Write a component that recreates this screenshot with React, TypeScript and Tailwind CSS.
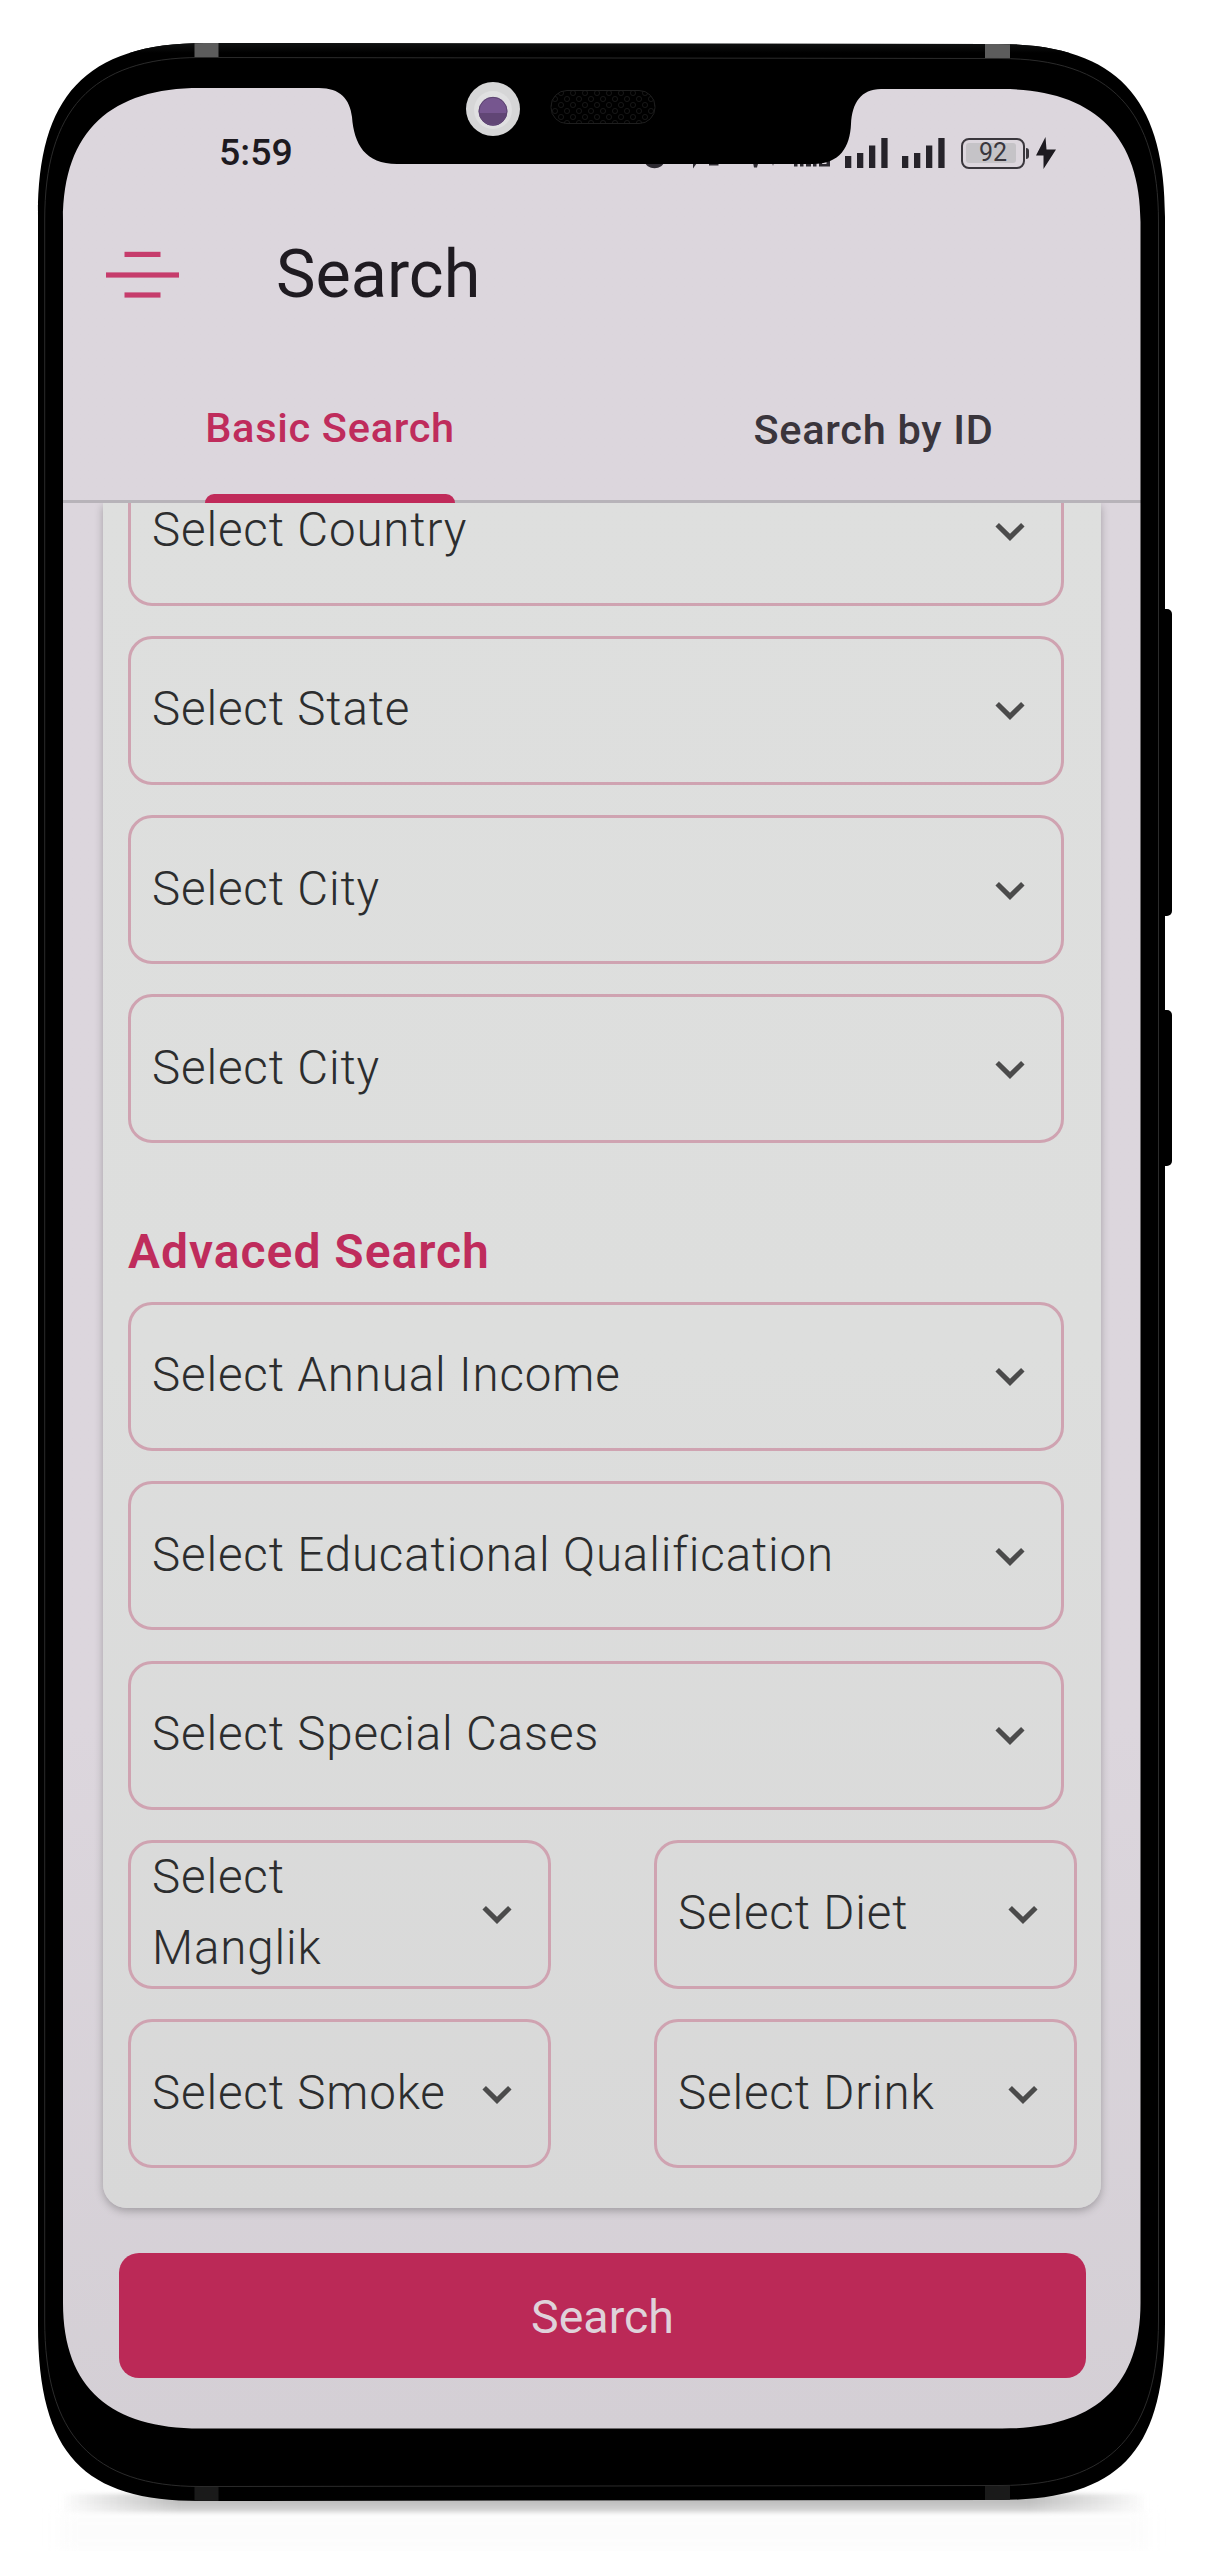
import React from "react";

function Chevron() {
  return (
    <svg className="mt-[2px] h-[24px] w-[36px] shrink-0" viewBox="0 0 36 24" fill="none">
      <path d="M5.2 4.8 L18 17.4 L30.8 4.8" stroke="#4b4b4b" strokeWidth="5" />
    </svg>
  );
}

function SelectField({ label, leading = "leading-[52px]" }: { label: string; leading?: string }) {
  return (
    <button
      className={`flex h-[149px] items-center justify-between gap-[20px] rounded-[24px] border-[3px] border-[#cfa3b1] pl-[21px] pr-[33px] text-left text-[47.5px] font-light tracking-[0.85px] text-[#2c2d2e] ${leading}`}
    >
      <span className="-mt-[2px] min-w-0">{label}</span>
      <Chevron />
    </button>
  );
}

function SignalBars() {
  return (
    <svg className="h-[30px] w-[43px]" viewBox="0 0 43 30" fill="#26232a">
      <rect x="0" y="18" width="6.3" height="12" />
      <rect x="12" y="15" width="6.3" height="15" />
      <rect x="24" y="7.5" width="6.3" height="22.5" />
      <rect x="36.3" y="0" width="6.3" height="30" />
    </svg>
  );
}

function StatusBar() {
  return (
    <div className="flex h-[130px] items-center pl-[156px] text-[#1d1a20]">
      <span className="-mt-[3px] w-[626px] text-[37.5px] leading-[40px] font-medium">5:59</span>
      <SignalBars />
      <span className="w-[14px]" />
      <SignalBars />
      <div className="ml-[16px] flex h-[31px] w-[64px] items-center rounded-[8px] border-[2.5px] border-[#3a373d] p-[3px]">
        <div className="flex h-[20px] w-[50px] items-center justify-center rounded-[3px] bg-[#c5c3c7] pl-[4px] text-[25px] leading-[20px] text-[#3a373d]">
          92
        </div>
      </div>
      <div className="ml-px h-[11px] w-[3px] rounded-r-sm bg-[#3a373d]" />
      <svg className="ml-[7px] h-[32px] w-[20px]" viewBox="0 0 20 32" fill="#1d1a20">
        <path d="M9.5 0 L0 18.5 H7.5 V32 L20 12.5 H10.5 Z" />
      </svg>
    </div>
  );
}

function AppHeader() {
  return (
    <header className="h-[415px]">
      <StatusBar />
      <div className="flex h-[112px] items-center pl-[43px]">
        <svg className="h-[48px] w-[73px]" viewBox="0 0 73 48" fill="#c63c6c">
          <rect x="18.5" y="1.8" width="36" height="5.2" />
          <rect x="0" y="22.4" width="73" height="5.2" />
          <rect x="18.5" y="42.4" width="36" height="5.2" />
        </svg>
        <h1 className="ml-[97px] text-[66.5px] leading-[80px] text-[#1f1b21]">Search</h1>
      </div>
      <div className="flex h-[173px] border-b-[3px] border-[#b7b3b9] text-[41.5px] leading-[50px] font-medium tracking-[0.7px]">
        <div className="flex h-[173px] w-[534px] flex-col items-center pt-[73px] text-[#bf2c5c]">
          <span>Basic Search</span>
          <span className="mt-[41px] h-[9px] w-[250px] rounded-t-[9px] bg-[#c02a5a]" />
        </div>
        <div className="flex w-[544px] justify-center pt-[75px] pl-[9px] text-[#3a353c]">
          <span>Search by ID</span>
        </div>
      </div>
    </header>
  );
}

function SearchForm() {
  return (
    <main className="flex h-[1705px] w-[998px] flex-col overflow-hidden rounded-b-[24px] bg-linear-to-b from-[#dedfde] via-[#dddedd] to-[#d8d8d8] pl-[25px]">
      <div className="-mt-[46.5px] flex w-[936px] flex-col gap-[30.3px]">
        <SelectField label="Select Country" />
        <SelectField label="Select State" />
        <SelectField label="Select City" />
        <SelectField label="Select City" />
      </div>
      <h2 className="mt-[79px] h-[60px] text-[48px] leading-[60px] font-semibold tracking-[1px] text-[#bf2c5c]">
        Advaced Search
      </h2>
      <div className="mt-[19.6px] flex w-[936px] flex-col gap-[30.3px]">
        <SelectField label="Select Annual Income" />
        <SelectField label="Select Educational Qualification" />
        <SelectField label="Select Special Cases" />
      </div>
      <div className="mt-[30.3px] grid w-[949px] grid-cols-[423px_423px] justify-between gap-y-[30.3px]">
        <SelectField label="Select Manglik" leading="leading-[71px]" />
        <SelectField label="Select Diet" />
        <SelectField label="Select Smoke" />
        <SelectField label="Select Drink" />
      </div>
    </main>
  );
}

function PhoneFrame() {
  const outer =
    "M38 215 C38 98 84 43 205 43 L998 44 C1119 44 1165 100 1165 217 V2323 C1165 2453 1119 2500 998 2500 L200 2501 C84 2501 38 2455 38 2325 Z";
  const screen =
    "M63 220 C63 130 112 88 200 88 H319 C340 88 350 99 352 117 C354 144 365 164 397 164 H813 C840 164 850 147 851 124 C852 103 861 89 881 89 H1002 C1090 89 1140.500 132 1140.500 222 V2303 C1140.500 2389 1092 2428.500 1002 2428.500 H200 C112 2428.500 63 2389 63 2303 Z";
  return (
    <svg className="pointer-events-none absolute inset-0 h-[2551px] w-[1213px]" viewBox="0 0 1213 2551">
      <defs>
        <pattern id="mesh" width="12" height="12" patternUnits="userSpaceOnUse">
          <circle cx="3" cy="3" r="2.6" fill="#000" stroke="#1b1b1b" strokeWidth="0.8" />
          <circle cx="9" cy="9" r="2.6" fill="#000" stroke="#1b1b1b" strokeWidth="0.8" />
        </pattern>
        <linearGradient id="rim" x1="0" y1="0" x2="0" y2="1">
          <stop offset="0" stopColor="#101111" />
          <stop offset="1" stopColor="#000" />
        </linearGradient>
        <clipPath id="body">
          <path d={outer} />
        </clipPath>
      </defs>
      <g fill="#2d2a31">
        <path d="M644 160 C646 171 663 171 665 160 Z" />
        <path d="M693 160 H699 L693 168.500 Z" />
        <rect x="709" y="160" width="9.500" height="5.500" />
        <path d="M752.500 160 H759 L757 167.500 H754 Z" />
        <path d="M770 160 H776 L773 166 Z" opacity="0.5" />
        <path d="M794 160 h3.500 v6.500 h-3.500 Z M800 160 h3.500 v6.500 h-3.500 Z M806 160 h5 v6.500 h-5 Z M813 160 h3.500 v6.500 h-3.500 Z M819 160 h3 v6.500 h-3 Z M819 164 h11 v2.500 h-11 Z M826.500 160 h3.500 v6.500 h-3.500 Z" />
      </g>
      <rect x="1155" y="609" width="17" height="307" rx="5" fill="#000" />
      <rect x="1155" y="1010" width="17" height="156" rx="5" fill="#000" />
      <path d={`${outer} ${screen}`} fill="#000" fillRule="evenodd" />
      <g clipPath="url(#body)">
        <rect x="120" y="43" width="960" height="10" fill="url(#rim)" />
        <rect x="194.500" y="42" width="24" height="15.500" fill="#5c5c5c" />
        <rect x="985" y="43" width="25" height="15.500" fill="#5c5c5c" />
        <rect x="194.500" y="2487" width="24" height="15" fill="#1a1a1a" />
        <rect x="985" y="2486" width="25" height="15" fill="#1a1a1a" />
      </g>
      <path
        d="M44.700 220 C44.700 112 90 57.500 200 57.500 L1000 58.500 C1112 58.500 1158.500 112 1158.500 222 V2320 C1158.500 2432 1112 2485.500 1000 2485.500 L200 2486.500 C92 2486.500 44.700 2434 44.700 2320 Z"
        fill="none"
        stroke="#2b2b2b"
        strokeWidth="1"
      />
      <circle cx="493" cy="109" r="27" fill="#d6d6d7" />
      <circle cx="493" cy="110" r="19" fill="#e0e0e1" />
      <circle cx="493" cy="111.300" r="14.300" fill="#76568f" />
      <path d="M479 113 A14.300 14.300 0 0 0 507 113 Z" fill="#614675" />
      <circle cx="493" cy="111.300" r="14" fill="none" stroke="#5c4470" strokeWidth="1" />
      <rect x="551" y="90.500" width="104" height="33" rx="16" fill="url(#mesh)" stroke="#1e1e1e" strokeWidth="1" />
    </svg>
  );
}

export default function App() {
  return (
    <div className="relative h-[2551px] w-[1213px] overflow-hidden bg-white font-['Roboto',sans-serif]">
      <div className="absolute top-[2494px] left-[60px] h-[19px] w-[1088px] bg-[linear-gradient(to_right,transparent,#bdbdbd_11%,#bdbdbd_89%,transparent)] blur-[2px]" />
      <div className="absolute top-[2513px] left-[60px] h-[38px] w-[1088px] bg-[#fcfcfc] blur-[8px]" />
      <div className="px-[63px] pt-[88px]">
        <div className="h-[2341px] w-[1078px] overflow-hidden rounded-[90px] bg-linear-to-b from-[#dcd6dd] via-[#dcd6dd] via-70% to-[#d4cfd5]">
          <AppHeader />
          <div className="overflow-hidden px-[40px] pb-[45px]">
            <div className="rounded-b-[24px] shadow-[0_3px_8px_rgba(0,0,0,0.26)]">
              <SearchForm />
            </div>
          </div>
          <button className="ml-[56px] flex h-[125px] w-[967px] items-center justify-center rounded-[20px] bg-[#bb2957] pt-[2px] text-[46.5px] leading-[60px] text-[#dfd2da]">
            Search
          </button>
        </div>
      </div>
      <PhoneFrame />
    </div>
  );
}
